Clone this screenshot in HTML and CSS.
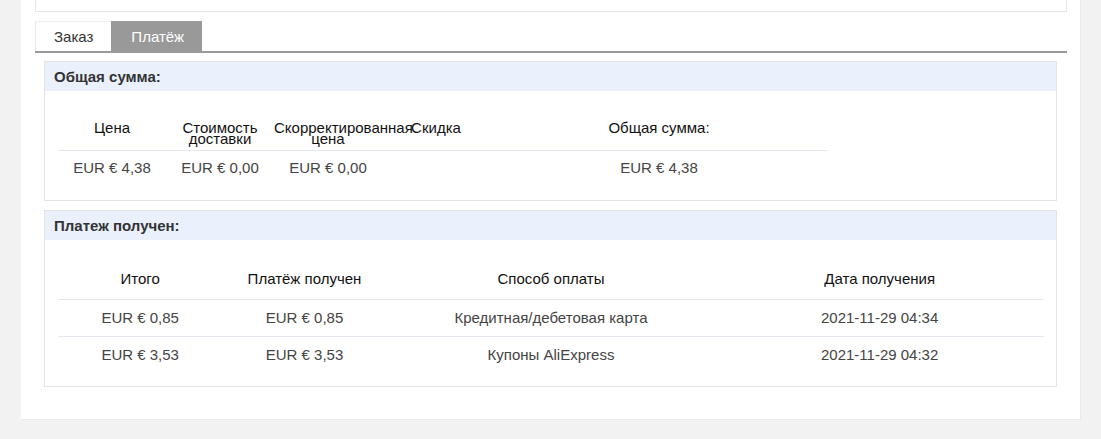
FILE: index.html
```html
<!DOCTYPE html>
<html lang="ru">
<head>
  <meta charset="UTF-8">
  <title>Платёж</title>
  <link rel="stylesheet" href="styles.css">
</head>
<body>
  <div class="page">
    <div class="order-info"></div>

    <!-- Tabs -->
    <div class="tabs">
      <div class="tab">Заказ</div>
      <div class="tab active">Платёж</div>
    </div>

    <!-- Total -->
    <div class="block">
      <div class="block-title">Общая сумма:</div>
      <div class="grid total-grid">
        <div class="row head">
          <div class="cell">Цена</div>
          <div class="cell">Стоимость доставки</div>
          <div class="cell">Скорректированная цена</div>
          <div class="cell">Скидка</div>
          <div class="cell">Общая сумма:</div>
        </div>
        <div class="row">
          <div class="cell">EUR € 4,38</div>
          <div class="cell">EUR € 0,00</div>
          <div class="cell">EUR € 0,00</div>
          <div class="cell"></div>
          <div class="cell">EUR € 4,38</div>
        </div>
      </div>
    </div>

    <!-- Payments -->
    <div class="block">
      <div class="block-title">Платеж получен:</div>
      <div class="grid pay-grid">
        <div class="row head">
          <div class="cell">Итого</div>
          <div class="cell">Платёж получен</div>
          <div class="cell">Способ оплаты</div>
          <div class="cell">Дата получения</div>
        </div>
        <div class="row">
          <div class="cell">EUR € 0,85</div>
          <div class="cell">EUR € 0,85</div>
          <div class="cell">Кредитная/дебетовая карта</div>
          <div class="cell">2021-11-29 04:34</div>
        </div>
        <div class="row">
          <div class="cell">EUR € 3,53</div>
          <div class="cell">EUR € 3,53</div>
          <div class="cell">Купоны AliExpress</div>
          <div class="cell">2021-11-29 04:32</div>
        </div>
      </div>
    </div>
  </div>
</body>
</html>
```

FILE: styles.css
```css
body {
  margin: 0;
  background: #f2f2f2;
  font-family: "Liberation Sans", Arial, sans-serif;
  color: #333;
}
.page {
  width: 1060px;
  margin-left: 21px;
  padding: 0 13px 32px 14px;
  box-sizing: border-box;
  background: #fff;
  border-right: 1px solid #ebebeb;
  border-bottom: 1px solid #ebebeb;
}
.order-info {
  height: 12px;
  border: 1px solid #e6e6e6;
  border-top: none;
  box-sizing: border-box;
}

/* Tabs */
.tabs {
  display: flex;
  margin-top: 9px;
  border-bottom: 2px solid #999;
}
.tab {
  height: 30px;
  line-height: 30px;
  padding: 0 18px;
  font-size: 15px;
  color: #333;
  box-sizing: border-box;
  border-left: 1px solid #e8e8e8;
  border-top: 1px solid #f0f0f0;
}
.tab.active {
  background: #999;
  color: #fff;
  border-color: #999;
  padding: 0 18px 0 19px;
}

/* Blocks */
.block {
  margin: 8px 10px 0 9px;
  border: 1px solid #e3e3e3;
  padding-bottom: 13px;
}
.block + .block {
  margin-top: 9px;
}
.block-title {
  height: 29px;
  line-height: 29px;
  padding-left: 9px;
  background: #eaf1fd;
  font-size: 15px;
  font-weight: bold;
  color: #333;
}

/* Tables */
.grid {
  margin-left: 13px;
  font-size: 15px;
}
.total-grid {
  width: 770px;
}
.pay-grid {
  width: 986px;
}
.row {
  display: grid;
  border-bottom: 1px solid #e5e7ee;
  color: #444;
}
.row:last-child {
  border-bottom: none;
}
.total-grid .row {
  grid-template-columns: 108px 108px 108px 108px 1fr;
  padding: 7px 0 9px;
}
.pay-grid .row {
  grid-template-columns: 1fr 1fr 2fr 2fr;
  padding: 8px 0;
}
.cell {
  text-align: center;
  line-height: 20px;
  white-space: nowrap;
}
.total-grid .cell {
  white-space: normal;
  min-width: 0;
}
.row.head {
  color: #111;
}
.total-grid .row.head {
  align-items: start;
  padding: 31px 0 6px;
}
.total-grid .row.head .cell {
  line-height: 11px;
}
.pay-grid .row.head {
  padding: 29px 0 10px;
}
```
